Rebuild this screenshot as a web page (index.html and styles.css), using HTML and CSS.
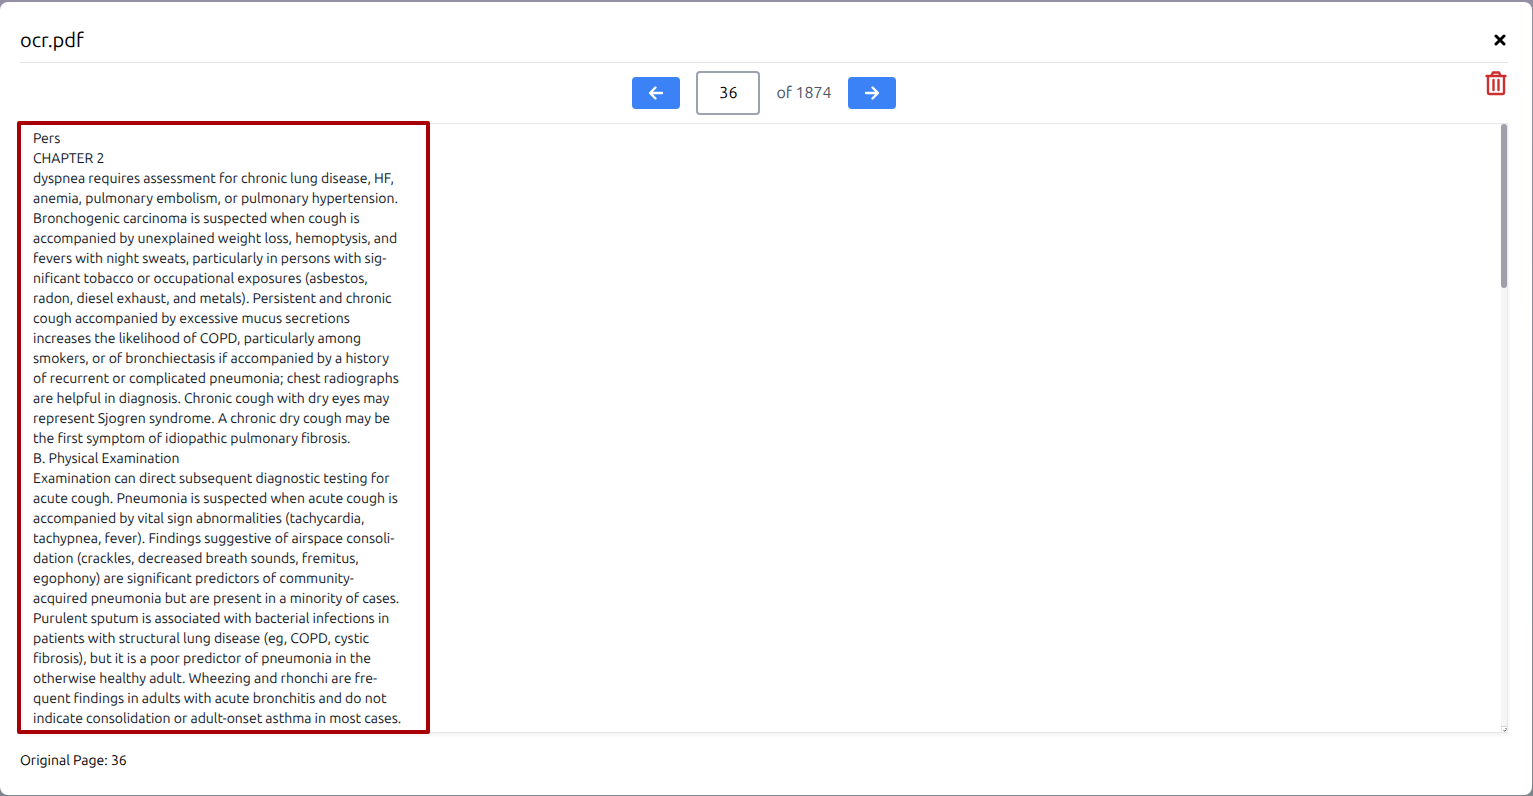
FILE: index.html
```html
<!DOCTYPE html>
<html lang="en">
<head>
<meta charset="utf-8">
<meta name="viewport" content="width=device-width, initial-scale=1">
<title>ocr.pdf</title>
<link rel="stylesheet" href="styles.css">
</head>
<body>
<main class="modal">
  <header class="modal-header">
    <h1 class="title">ocr.pdf</h1>
    <button class="icon-button close" type="button" aria-label="Close">
      <svg width="12" height="12" viewBox="0 0 12 12" fill="none" stroke="currentColor" stroke-width="3" stroke-linecap="round"><path d="M2 2l8 8M10 2l-8 8"/></svg>
    </button>
  </header>
  <div class="toolbar">
    <nav class="pager" aria-label="Pages">
      <button class="page-button" type="button" aria-label="Previous page">
        <svg width="16" height="16" viewBox="0 0 16 16" fill="none" stroke="currentColor" stroke-width="2.400" stroke-linecap="round" stroke-linejoin="round"><path d="M14 8H2.500M7.500 2.500L2 8l5.500 5.500"/></svg>
      </button>
      <input class="page-input" type="text" value="36" aria-label="Page number">
      <span class="page-total">of 1874</span>
      <button class="page-button" type="button" aria-label="Next page">
        <svg width="16" height="16" viewBox="0 0 16 16" fill="none" stroke="currentColor" stroke-width="2.400" stroke-linecap="round" stroke-linejoin="round"><path d="M2 8h11.500M8.500 2.500L14 8l-5.500 5.500"/></svg>
      </button>
    </nav>
    <button class="icon-button delete" type="button" aria-label="Delete page">
      <svg width="24" height="26" viewBox="0 0 24 26" fill="none" stroke="currentColor" stroke-width="2.400" stroke-linecap="round" stroke-linejoin="round"><path d="M2.500 5h19M4 5v16.500a1.500 1.500 0 0 0 1.500 1.500h13a1.500 1.500 0 0 0 1.500-1.500V5M7.500 4.500L9 1.500h6l1.500 3M9.500 9v10M14.500 9v10"/></svg>
    </button>
  </div>
  <div class="editor">
    <textarea class="page-text" aria-label="Page text" spellcheck="false">Pers
CHAPTER 2
dyspnea requires assessment for chronic lung disease, HF,
anemia, pulmonary embolism, or pulmonary hypertension.
Bronchogenic carcinoma is suspected when cough is
accompanied by unexplained weight loss, hemoptysis, and
fevers with night sweats, particularly in persons with sig-
nificant tobacco or occupational exposures (asbestos,
radon, diesel exhaust, and metals). Persistent and chronic
cough accompanied by excessive mucus secretions
increases the likelihood of COPD, particularly among
smokers, or of bronchiectasis if accompanied by a history
of recurrent or complicated pneumonia; chest radiographs
are helpful in diagnosis. Chronic cough with dry eyes may
represent Sjogren syndrome. A chronic dry cough may be
the first symptom of idiopathic pulmonary fibrosis.
B. Physical Examination
Examination can direct subsequent diagnostic testing for
acute cough. Pneumonia is suspected when acute cough is
accompanied by vital sign abnormalities (tachycardia,
tachypnea, fever). Findings suggestive of airspace consoli-
dation (crackles, decreased breath sounds, fremitus,
egophony) are significant predictors of community-
acquired pneumonia but are present in a minority of cases.
Purulent sputum is associated with bacterial infections in
patients with structural lung disease (eg, COPD, cystic
fibrosis), but it is a poor predictor of pneumonia in the
otherwise healthy adult. Wheezing and rhonchi are fre-
quent findings in adults with acute bronchitis and do not
indicate consolidation or adult-onset asthma in most cases.</textarea>
    <div class="scrollbar" aria-hidden="true">
      <div class="scroll-thumb"></div>
      <svg class="resizer" width="6" height="6" viewBox="0 0 6 6"><path d="M0 0h6v6H0z" fill="#fff"/><path d="M0 6V.5h6" fill="none" stroke="#d4d4d4"/><path d="M2.500 4.500h1M4.500 2.500h1M3.500 5.500l2-2" stroke="#555"/></svg>
    </div>
    <div class="highlight"></div>
  </div>
  <footer class="modal-footer">Original Page: 36</footer>
</main>
</body>
</html>
```
FILE: styles.css
```css
* {
  box-sizing: border-box;
}

body {
  margin: 0;
  height: 100vh;
  padding: 2px 1px 1px 0;
  background: linear-gradient(#958fa3, #80868e);
  font-family: Ubuntu, "Noto Sans", sans-serif;
  font-size: 14px;
  line-height: 20px;
  text-rendering: geometricPrecision;
  color: #000;
}

button,
input,
textarea {
  font: inherit;
  text-rendering: inherit;
  margin: 0;
}

svg {
  display: block;
}

.modal {
  height: 100%;
  display: flex;
  flex-direction: column;
  padding: 20px 24px 25px 20px;
  background: #fff;
  border-radius: 8px;
}

.modal-header {
  display: flex;
  align-items: center;
  justify-content: space-between;
  height: 41px;
  padding-bottom: 4px;
  border-bottom: 1px solid #e3e4e7;
}

.title {
  margin: 0;
  font-size: 20px;
  font-weight: 400;
  line-height: 28px;
}

.icon-button {
  display: flex;
  padding: 0;
  border: 0;
  background: none;
  cursor: pointer;
}

.close {
  padding: 2px;
}

.toolbar {
  display: grid;
  grid-template-columns: 24px 1fr 24px;
  padding: 8px 0;
}

.pager {
  grid-column: 2;
  display: flex;
  align-items: center;
  justify-content: center;
  gap: 16px;
}

.page-button {
  display: flex;
  align-items: center;
  justify-content: center;
  width: 48px;
  height: 32px;
  padding: 0;
  border: 0;
  border-radius: 4px;
  background: #3b82f6;
  color: #fff;
  cursor: pointer;
}

.page-input {
  width: 64px;
  height: 44px;
  border: 2px solid #9ca3af;
  border-radius: 4px;
  background: #fff;
  color: #000;
  font-size: 16px;
  text-align: center;
}

.page-total {
  font-size: 16px;
  line-height: 24px;
  color: #4b5563;
}

.delete {
  align-self: start;
  color: #cb2f2f;
}

.editor {
  position: relative;
  flex: 1;
  display: flex;
  min-height: 0;
}

.page-text {
  flex: 1;
  padding: 4px 12px;
  border: 1px solid #e5e7eb;
  background: #fff;
  color: #111827;
  box-shadow: 0 2px 4px rgb(0 0 0 / 6%);
  overflow: hidden;
  resize: none;
  outline: 0;
}

.scrollbar {
  position: absolute;
  inset: 1px 1px 1px auto;
  width: 6px;
  background: #f5f5f5;
}

.scroll-thumb {
  height: 27%;
  border-radius: 3px;
  background: #a09fab;
}

.resizer {
  position: absolute;
  right: 0;
  bottom: 0;
}

.highlight {
  position: absolute;
  inset: -2px auto -1px -3px;
  width: 413px;
  border: 4px solid #a80006;
  border-radius: 2px;
  pointer-events: none;
}

.modal-footer {
  padding-top: 17px;
}
```
